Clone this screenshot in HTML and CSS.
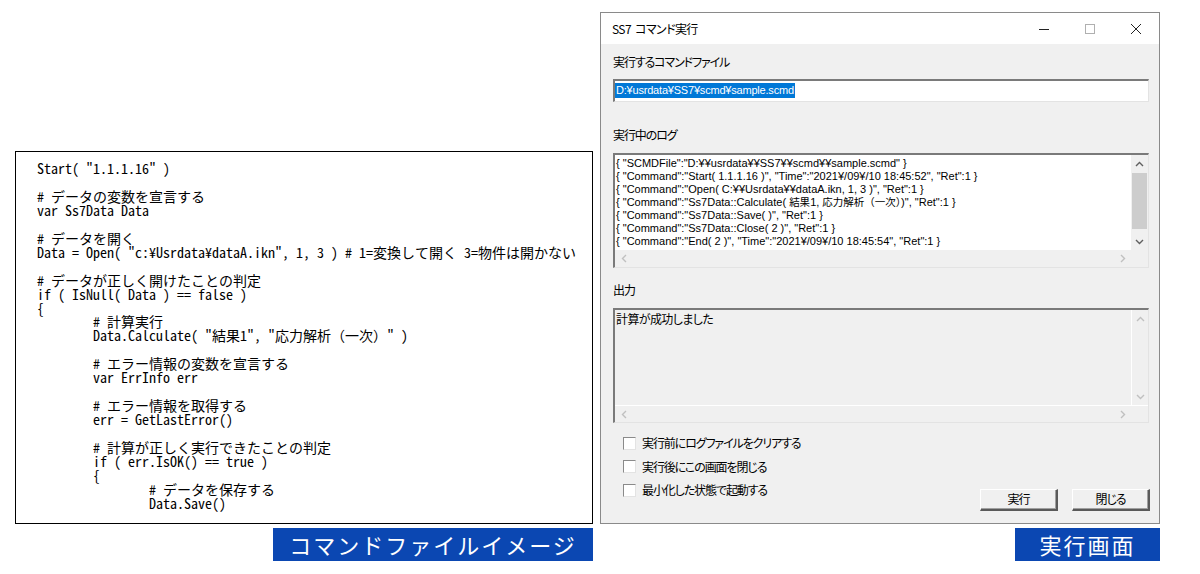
FILE: index.html
```html
<!DOCTYPE html>
<html lang="ja">
<head>
<meta charset="utf-8">
<title>SS7 コマンド実行</title>
<link rel="stylesheet" href="styles.css">
</head>
<body>
<div class="page">
  <div class="col col-left">
    <pre class="code">Start( "1.1.1.16" )

# データの変数を宣言する
var Ss7Data Data

# データを開く
Data = Open( "c:¥Usrdata¥dataA.ikn", 1, 3 ) # 1=変換して開く 3=物件は開かない

# データが正しく開けたことの判定
if ( IsNull( Data ) == false )
{
	# 計算実行
	Data.Calculate( "結果1", "応力解析（一次）" )

	# エラー情報の変数を宣言する
	var ErrInfo err

	# エラー情報を取得する
	err = GetLastError()

	# 計算が正しく実行できたことの判定
	if ( err.IsOK() == true )
	{
		# データを保存する
		Data.Save()</pre>
    <div class="caption caption-left">コマンドファイルイメージ</div>
  </div>

  <div class="col col-right">
    <div class="dialog">
      <div class="titlebar">
        <span class="title">SS7 コマンド実行</span>
        <div class="winbtns">
          <span class="winbtn"><svg width="10" height="10" viewBox="0 0 10 10"><path d="M0 5.5H10" stroke="#222" stroke-width="1"/></svg></span>
          <span class="winbtn"><svg width="10" height="10" viewBox="0 0 10 10"><rect x="0.5" y="0.5" width="9" height="9" fill="none" stroke="#b0b0b0" stroke-width="1"/></svg></span>
          <span class="winbtn"><svg width="10" height="10" viewBox="0 0 10 10"><path d="M0 0L10 10M10 0L0 10" stroke="#222" stroke-width="1"/></svg></span>
        </div>
      </div>
      <div class="dbody">
        <div class="lbl lbl-file">実行するコマンドファイル</div>
        <div class="input"><span class="sel">D:¥usrdata¥SS7¥scmd¥sample.scmd</span></div>

        <div class="lbl lbl-log">実行中のログ</div>
        <div class="box box-log">
          <div class="box-main">
            <div class="box-text log-text">
              <div class="ln">{ "SCMDFile":"D:¥¥usrdata¥¥SS7¥¥scmd¥¥sample.scmd" }</div>
              <div class="ln">{ "Command":"Start( 1.1.1.16 )", "Time":"2021¥/09¥/10 18:45:52", "Ret":1 }</div>
              <div class="ln">{ "Command":"Open( C:¥¥Usrdata¥¥dataA.ikn, 1, 3 )", "Ret":1 }</div>
              <div class="ln">{ "Command":"Ss7Data::Calculate( <span class="jp">結果</span>1, <span class="jp">応力解析（一次）</span>)", "Ret":1 }</div>
              <div class="ln">{ "Command":"Ss7Data::Save( )", "Ret":1 }</div>
              <div class="ln">{ "Command":"Ss7Data::Close( 2 )", "Ret":1 }</div>
              <div class="ln">{ "Command":"End( 2 )", "Time":"2021¥/09¥/10 18:45:54", "Ret":1 }</div>
            </div>
            <div class="vscroll">
              <span class="arrow"><svg width="9" height="6" viewBox="0 0 9 6"><path d="M1 5L4.5 1.5L8 5" fill="none" stroke="#606060" stroke-width="1.4"/></svg></span>
              <span class="thumb-area"><span class="thumb"></span></span>
              <span class="arrow"><svg width="9" height="6" viewBox="0 0 9 6"><path d="M1 1L4.5 4.5L8 1" fill="none" stroke="#606060" stroke-width="1.4"/></svg></span>
            </div>
          </div>
          <div class="hscroll">
            <span class="arrow"><svg width="6" height="9" viewBox="0 0 6 9"><path d="M5 1L1.5 4.5L5 8" fill="none" stroke="#c0c0c0" stroke-width="1.4"/></svg></span>
            <span class="arrow"><svg width="6" height="9" viewBox="0 0 6 9"><path d="M1 1L4.5 4.5L1 8" fill="none" stroke="#c0c0c0" stroke-width="1.4"/></svg></span>
            <span class="corner"></span>
          </div>
        </div>

        <div class="lbl lbl-out">出力</div>
        <div class="box box-out">
          <div class="box-main">
            <div class="box-text out-text">計算が成功しました</div>
            <div class="vscroll">
              <span class="arrow"><svg width="9" height="6" viewBox="0 0 9 6"><path d="M1 5L4.5 1.5L8 5" fill="none" stroke="#c0c0c0" stroke-width="1.4"/></svg></span>
              <span class="thumb-area"></span>
              <span class="arrow"><svg width="9" height="6" viewBox="0 0 9 6"><path d="M1 1L4.5 4.5L8 1" fill="none" stroke="#c0c0c0" stroke-width="1.4"/></svg></span>
            </div>
          </div>
          <div class="hscroll">
            <span class="arrow"><svg width="6" height="9" viewBox="0 0 6 9"><path d="M5 1L1.5 4.5L5 8" fill="none" stroke="#c0c0c0" stroke-width="1.4"/></svg></span>
            <span class="arrow"><svg width="6" height="9" viewBox="0 0 6 9"><path d="M1 1L4.5 4.5L1 8" fill="none" stroke="#c0c0c0" stroke-width="1.4"/></svg></span>
            <span class="corner"></span>
          </div>
        </div>

        <div class="bottom">
          <div class="checks">
            <label class="chk"><span class="cbox"></span>実行前にログファイルをクリアする</label>
            <label class="chk"><span class="cbox"></span>実行後にこの画面を閉じる</label>
            <label class="chk"><span class="cbox"></span>最小化した状態で起動する</label>
          </div>
          <div class="buttons">
            <span class="btn">実行</span>
            <span class="btn">閉じる</span>
          </div>
        </div>
      </div>
    </div>
    <div class="caption caption-right">実行画面</div>
  </div>
</div>
</body>
</html>
```

FILE: styles.css
```css
* { box-sizing: border-box; }
html, body { margin: 0; padding: 0; background: #fff; }
body {
  font-family: "Noto Sans CJK JP", "Noto Sans", sans-serif;
  color: #000;
  width: 1200px;
  height: 574px;
  overflow: hidden;
}
.page {
  display: flex;
  align-items: flex-start;
  gap: 7px;
  padding-left: 15px;
}
.col { display: flex; flex-direction: column; }
.col-left { width: 578px; margin-top: 151px; }
.col-right { width: 560px; margin-top: 12px; }

.code {
  margin: 0;
  height: 373px;
  border: 1px solid #000;
  background: #fff;
  padding: 10px 0 0 21px;
  font-family: "Noto Sans Mono CJK JP", "Noto Sans CJK JP", "Liberation Mono", monospace;
  font-size: 14px;
  line-height: 13.95px;
  tab-size: 8;
  -moz-tab-size: 8;
  white-space: pre;
  overflow: hidden;
  color: #000;
}

.caption {
  align-self: flex-end;
  margin-top: 4px;
  height: 33px;
  background: #0b47b2;
  color: #fff;
  font-size: 22px;
  line-height: 33px;
  letter-spacing: 2px;
  text-align: center;
}
.caption-left { width: 320px; }
.caption-right { width: 145px; }

.dialog {
  height: 512px;
  border: 1px solid #8a8a8a;
  background: #f0f0f0;
  display: flex;
  flex-direction: column;
}
.titlebar {
  height: 31px;
  background: #fff;
  display: flex;
  align-items: center;
  justify-content: space-between;
  padding-left: 11px;
}
.lbl, .chk, .btn {
  font-feature-settings: "palt";
  letter-spacing: -1.1px;
}
.title {
  font-size: 12px;
  line-height: 16px;
  font-feature-settings: "palt";
  letter-spacing: -0.6px;
  word-spacing: 2px;
}
.winbtns { display: flex; height: 100%; }
.winbtn {
  width: 46px;
  height: 100%;
  display: flex;
  align-items: center;
  justify-content: center;
}
.winbtn svg { display: block; }

.dbody {
  flex: 1;
  display: flex;
  flex-direction: column;
  padding: 0 10px 12px 12px;
}
.lbl { font-size: 12px; line-height: 16px; height: 16px; }
.lbl-file { margin-top: 10px; }
.lbl-log { margin-top: 25px; }
.lbl-out { margin-top: 14px; }

.input {
  margin-top: 9px;
  height: 23px;
  background: #fff;
  border-top: 2px solid #7a7a7a;
  border-left: 2px solid #7a7a7a;
  border-right: 1px solid #e3e3e3;
  border-bottom: 1px solid #e3e3e3;
  padding: 2px 0 0 0;
  font-family: "Liberation Sans", "Noto Sans CJK JP", sans-serif;
  font-size: 11px;
  letter-spacing: -0.2px;
  line-height: 15px;
}
.sel { background: #0078d7; color: #fff; display: inline-block; padding: 0 1px; }

.box {
  margin-top: 10px;
  height: 115px;
  border-top: 2px solid #7a7a7a;
  border-left: 2px solid #7a7a7a;
  border-right: 1px solid #e3e3e3;
  border-bottom: 1px solid #e3e3e3;
  display: flex;
  flex-direction: column;
}
.box-log { background: #fff; }
.box-out { background: #f0f0f0; }
.box-main { flex: 1; display: flex; min-height: 0; }
.box-text {
  flex: 1;
  overflow: hidden;
  white-space: nowrap;
  padding: 1px 0 0 1px;
}
.log-text {
  font-family: "Liberation Sans", "Noto Sans CJK JP", sans-serif;
  font-size: 11px;
  line-height: 13px;
  padding-top: 2px;
}
.ln { height: 13px; }
.jp { font-family: "Noto Sans CJK JP", sans-serif; font-size: 10.5px; line-height: 12px; }
.out-text {
  font-size: 12px;
  line-height: 16px;
  padding-top: 1px;
  font-feature-settings: "palt";
  letter-spacing: -0.6px;
}

.vscroll {
  width: 17px;
  display: flex;
  flex-direction: column;
  background: #f0f0f0;
}
.box-out .vscroll { border-left: 1px solid #fff; }
.vscroll .arrow {
  height: 17px;
  display: flex;
  align-items: center;
  justify-content: center;
}
.thumb-area { flex: 1; display: flex; flex-direction: column; padding-top: 1px; }
.thumb { height: 56px; background: #cdcdcd; margin: 0 1px; }

.hscroll {
  height: 17px;
  display: flex;
  background: #f0f0f0;
}
.box-out .hscroll { border-top: 1px solid #fff; }
.hscroll .arrow {
  width: 17px;
  display: flex;
  align-items: center;
  justify-content: center;
}
.hscroll .arrow:nth-child(2) { margin-left: auto; }
.corner { width: 17px; background: #f0f0f0; }

.bottom {
  flex: 1;
  display: flex;
  justify-content: space-between;
  align-items: flex-end;
}
.checks {
  display: flex;
  flex-direction: column;
  gap: 7.5px;
  padding-left: 10px;
  padding-bottom: 13px;
}
.chk {
  display: flex;
  align-items: center;
  font-size: 12px;
  line-height: 16px;
  height: 16px;
}
.cbox {
  width: 13px;
  height: 13px;
  background: #fff;
  border-top: 1px solid #8a8a8a;
  border-left: 1px solid #8a8a8a;
  border-right: 1px solid #e3e3e3;
  border-bottom: 1px solid #e3e3e3;
  margin-right: 6px;
}
.buttons { display: flex; gap: 14px; margin-right: -1px; }
.btn {
  width: 78px;
  height: 22px;
  background: #f0f0f0;
  border-top: 1px solid #fff;
  border-left: 1px solid #fff;
  border-right: 2px solid #5a5a5a;
  border-bottom: 2px solid #5a5a5a;
  box-shadow: inset -1px -1px 0 #a0a0a0;
  font-size: 12px;
  line-height: 18px;
  text-align: center;
}
```
